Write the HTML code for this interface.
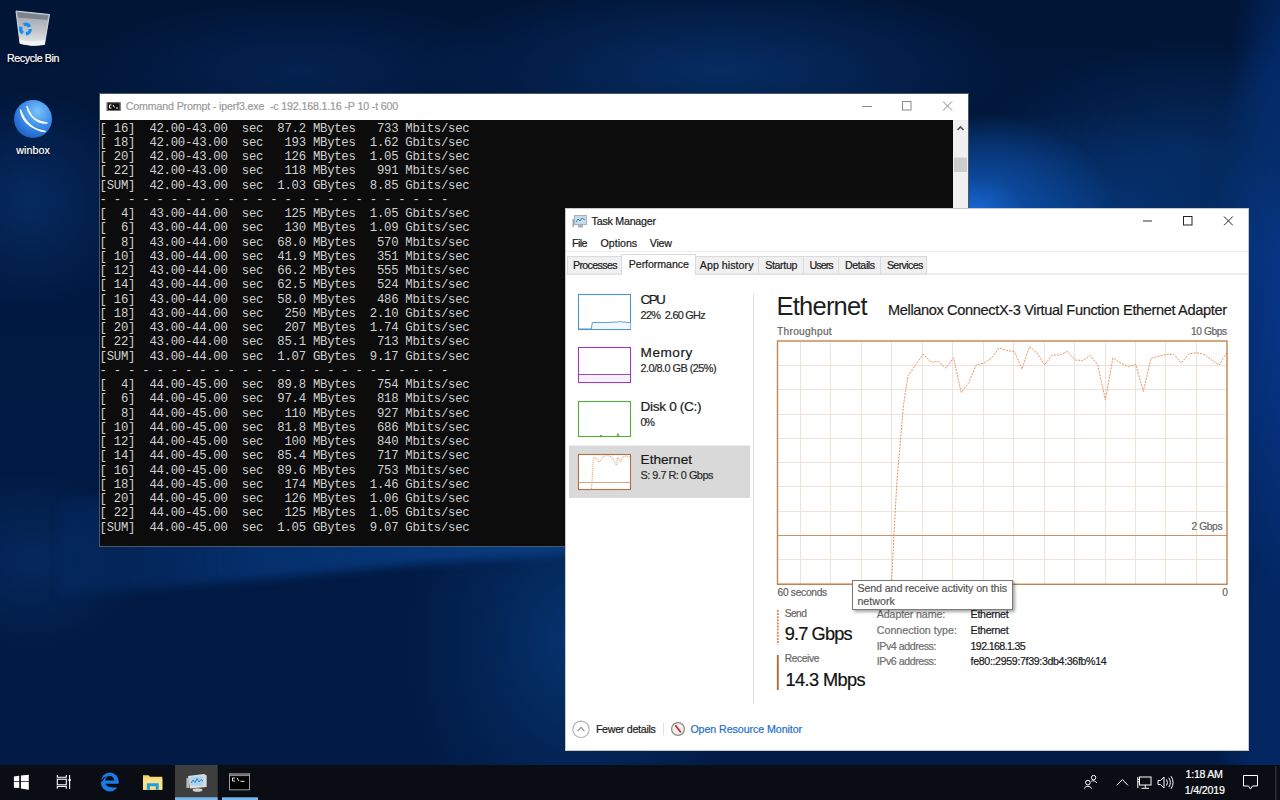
<!DOCTYPE html>
<html><head><meta charset="utf-8">
<style>
*{margin:0;padding:0;box-sizing:border-box}
html,body{width:1280px;height:800px;overflow:hidden}
body{position:relative;font-family:"Liberation Sans",sans-serif;background:#03204a}
.abs{position:absolute}
.t{position:absolute;white-space:pre;line-height:1;-webkit-text-stroke:0.2px currentColor}
svg{display:block}
#bg{position:absolute;left:0;top:0}
#cmd{position:absolute;left:99px;top:93px;width:870px;height:454px;background:#fff;border:1px solid #4a5868}
#cmdc{position:absolute;left:0;top:26px;width:853px;height:426px;background:#0c0c0c;overflow:hidden}
#cmdc pre{font-family:"Liberation Mono",monospace;font-size:12.3px;line-height:14.245px;letter-spacing:-0.269px;color:#d0d0d0;position:absolute;left:-0.4px;top:1.5px}
#cmdsb{position:absolute;left:853px;top:26px;width:15px;height:426px;background:#f0f0f0}
#tm{position:absolute;left:565px;top:208px;width:684px;height:543px;background:#fff}
#taskbar{position:absolute;left:0;top:764.5px;width:1280px;height:35.5px;background:#0b0d14}
</style></head><body>
<div id="bg" style="position:absolute;left:0;top:0;width:1280px;height:800px;overflow:hidden;
background:
radial-gradient(ellipse 140px 100px at 975px 212px, rgba(24,104,214,1) 0%, rgba(14,82,172,.75) 35%, rgba(8,60,130,0) 100%),
radial-gradient(ellipse 260px 120px at 1060px 230px, rgba(8,64,140,.8) 0%, rgba(8,64,140,0) 100%),
radial-gradient(ellipse 220px 110px at 1190px 150px, rgba(5,44,98,.85) 0%, rgba(5,44,98,0) 100%),
radial-gradient(ellipse 100px 300px at 1300px 300px, rgba(8,56,142,1) 0%, rgba(6,48,120,0) 100%),
radial-gradient(ellipse 90px 700px at 1300px 500px, rgba(3,40,102,1) 0%, rgba(3,40,102,.8) 70%, rgba(3,40,102,0) 100%),
radial-gradient(ellipse 300px 90px at 720px 70px, rgba(6,44,98,1) 0%, rgba(6,44,98,0) 100%),
radial-gradient(ellipse 220px 70px at 300px 70px, rgba(4,34,80,1) 0%, rgba(4,34,80,0) 100%),
radial-gradient(ellipse 110px 110px at 30px 200px, rgba(6,42,96,1) 0%, rgba(6,42,96,0) 100%),
radial-gradient(ellipse 110px 90px at 30px 560px, rgba(5,40,92,1) 0%, rgba(5,40,92,0) 100%),
radial-gradient(ellipse 170px 220px at 575px 640px, rgba(6,52,112,1) 0%, rgba(5,44,98,.6) 50%, rgba(5,44,98,0) 100%),
linear-gradient(180deg,#011536 0%,#011a42 45%,#011b46 100%);">
<div style="position:absolute;left:0;top:0;width:1280px;height:800px;filter:blur(5px)">
 <div style="position:absolute;left:0;top:0;width:1280px;height:800px;clip-path:polygon(60px 596px, 250px 580px, 420px 564px, 580px 553px, 580px 480px, 60px 500px);background:linear-gradient(90deg,rgba(6,50,116,0) 0%,rgba(6,52,118,.8) 20%,rgba(8,62,132,1) 45%,rgba(12,78,158,1) 100%)"></div>
</div>
</div>

<!-- desktop icons -->
<svg class="abs" style="left:0;top:0" width="70" height="160" viewBox="0 0 70 160">
 <defs><linearGradient id="binf" x1="0" y1="0" x2="0" y2="1"><stop offset="0" stop-color="#9aa0a8"/><stop offset="0.6" stop-color="#c4c8cc"/><stop offset="1" stop-color="#eceef0"/></linearGradient>
 <radialGradient id="wbx" cx="0.62" cy="0.3" r="0.85"><stop offset="0" stop-color="#7cc4fc"/><stop offset="0.5" stop-color="#3a8ae8"/><stop offset="1" stop-color="#1452b8"/></radialGradient></defs>
 <path d="M16,11 L49.5,14.5 L44.5,44.5 Q32,47 20,43.5 Z" fill="url(#binf)" stroke="#dfe2e6" stroke-width="0.9"/>
 <path d="M17.2,12.2 L48.3,15.4 L47.3,20 L18,17.5 Z" fill="#7c838c"/>
 <path d="M20,43.5 Q32,47 44.5,44.5 L45.2,40 Q32,42.5 19.6,39.5 Z" fill="#f4f6f8" opacity="0.8"/>
 <circle cx="25.5" cy="29" r="4.8" fill="none" stroke="#1a8ef0" stroke-width="3.4" stroke-dasharray="7 3"/>
 <circle cx="33" cy="119" r="19" fill="url(#wbx)"/>
 <path d="M20.5,110 Q23,127 45,131.5 Q27,129 20.5,110 Z" fill="#fff" stroke="#fff" stroke-width="1.6" stroke-linejoin="round"/>
 <path d="M27,106.5 Q30,121 47,123 Q33,124 27,106.5 Z" fill="#fff" stroke="#fff" stroke-width="1.3" stroke-linejoin="round"/>
</svg>
<div class="t" style="left:7.00px;top:52.67px;font-size:10.67px;color:#fff;letter-spacing:-0.377px;text-shadow:0 1px 2px rgba(0,0,0,.9)">Recycle Bin</div>
<div class="t" style="left:16.20px;top:144.87px;font-size:10.67px;color:#fff;letter-spacing:0.106px;text-shadow:0 1px 2px rgba(0,0,0,.9)">winbox</div>

<!-- cmd window -->
<div id="cmd">
 <div id="cmdc"><pre>[ 16]  42.00-43.00  sec  87.2 MBytes   733 Mbits/sec
[ 18]  42.00-43.00  sec   193 MBytes  1.62 Gbits/sec
[ 20]  42.00-43.00  sec   126 MBytes  1.05 Gbits/sec
[ 22]  42.00-43.00  sec   118 MBytes   991 Mbits/sec
[SUM]  42.00-43.00  sec  1.03 GBytes  8.85 Gbits/sec
- - - - - - - - - - - - - - - - - - - - - - - - -
[  4]  43.00-44.00  sec   125 MBytes  1.05 Gbits/sec
[  6]  43.00-44.00  sec   130 MBytes  1.09 Gbits/sec
[  8]  43.00-44.00  sec  68.0 MBytes   570 Mbits/sec
[ 10]  43.00-44.00  sec  41.9 MBytes   351 Mbits/sec
[ 12]  43.00-44.00  sec  66.2 MBytes   555 Mbits/sec
[ 14]  43.00-44.00  sec  62.5 MBytes   524 Mbits/sec
[ 16]  43.00-44.00  sec  58.0 MBytes   486 Mbits/sec
[ 18]  43.00-44.00  sec   250 MBytes  2.10 Gbits/sec
[ 20]  43.00-44.00  sec   207 MBytes  1.74 Gbits/sec
[ 22]  43.00-44.00  sec  85.1 MBytes   713 Mbits/sec
[SUM]  43.00-44.00  sec  1.07 GBytes  9.17 Gbits/sec
- - - - - - - - - - - - - - - - - - - - - - - - -
[  4]  44.00-45.00  sec  89.8 MBytes   754 Mbits/sec
[  6]  44.00-45.00  sec  97.4 MBytes   818 Mbits/sec
[  8]  44.00-45.00  sec   110 MBytes   927 Mbits/sec
[ 10]  44.00-45.00  sec  81.8 MBytes   686 Mbits/sec
[ 12]  44.00-45.00  sec   100 MBytes   840 Mbits/sec
[ 14]  44.00-45.00  sec  85.4 MBytes   717 Mbits/sec
[ 16]  44.00-45.00  sec  89.6 MBytes   753 Mbits/sec
[ 18]  44.00-45.00  sec   174 MBytes  1.46 Gbits/sec
[ 20]  44.00-45.00  sec   126 MBytes  1.06 Gbits/sec
[ 22]  44.00-45.00  sec   125 MBytes  1.05 Gbits/sec
[SUM]  44.00-45.00  sec  1.05 GBytes  9.07 Gbits/sec</pre></div>
 <div id="cmdsb"></div>
</div>
<svg class="abs" style="left:0;top:0" width="1280" height="800" viewBox="0 0 1280 800">
 <rect x="106.75" y="102.25" width="13.75" height="8.75" fill="#111"/>
 <rect x="107.25" y="102.75" width="12.75" height="7.75" fill="none" stroke="#777" stroke-width="1"/>
 <path d="M109.5,105 h2 M109.5,105 v3 h2 M113,105 l1.5,2.5 M116,108 h2" stroke="#fff" stroke-width="1"/>
 <line x1="862" y1="106.5" x2="872" y2="106.5" stroke="#8a8a8a" stroke-width="1"/>
 <rect x="902.5" y="101.5" width="8.5" height="8.5" fill="none" stroke="#8a8a8a" stroke-width="1"/>
 <path d="M943,101.5 L952,110.5 M952,101.5 L943,110.5" stroke="#8a8a8a" stroke-width="1"/>
 <path d="M957.5,130 L960.5,127 L963.5,130" fill="none" stroke="#505050" stroke-width="1.6"/>
 <rect x="954" y="157.5" width="13" height="14.5" fill="#cdcdcd"/>
</svg>
<div class="t" style="left:125.75px;top:100.57px;font-size:10.67px;color:#9a9a9a;letter-spacing:-0.155px;">Command Prompt - iperf3.exe  -c 192.168.1.16 -P 10 -t 600</div>

<!-- task manager -->
<div id="tm"></div>
<svg class="abs" style="left:0;top:0" width="1280" height="800" viewBox="0 0 1280 800">
 <!-- window border -->
 <rect x="565.5" y="208.5" width="683" height="542" fill="none" stroke="#c8c8c8" stroke-width="1"/>
 <!-- title icon -->
 <rect x="574.5" y="215.5" width="12" height="9" fill="#c8dbe8" stroke="#a8b0b8" stroke-width="1"/>
 <path d="M576,222 L578,219 L580,221 L582,218 L585,220" fill="none" stroke="#3a88c8" stroke-width="1"/>
 <rect x="578" y="225" width="5" height="2.5" fill="#a8b0b8"/>
 <rect x="572.5" y="219" width="1.5" height="8" fill="#a0a6ac"/>
 <!-- title buttons -->
 <line x1="1143" y1="221" x2="1152" y2="221" stroke="#333" stroke-width="1"/>
 <rect x="1183.5" y="216.5" width="8.5" height="8.5" fill="none" stroke="#222" stroke-width="1"/>
 <path d="M1224,216.5 L1232.8,225.3 M1232.8,216.5 L1224,225.3" stroke="#222" stroke-width="1"/>
 <!-- menu/tab separators -->
 <line x1="566" y1="251.5" x2="1248" y2="251.5" stroke="#ececec" stroke-width="1"/>
 <line x1="566" y1="274" x2="1248" y2="274" stroke="#dcdcdc" stroke-width="1"/>
 <!-- tabs -->
 <g stroke="#dadada" stroke-width="1" fill="#f0f0f0">
  <rect x="567.5" y="256.5" width="54" height="17.5"/>
  <rect x="695.5" y="256.5" width="63" height="17.5"/>
  <rect x="758.5" y="256.5" width="45" height="17.5"/>
  <rect x="803.5" y="256.5" width="35" height="17.5"/>
  <rect x="838.5" y="256.5" width="42" height="17.5"/>
  <rect x="880.5" y="256.5" width="46" height="17.5"/>
 </g>
 <path d="M621.5,275 V254.5 H695.5 V275" fill="#fff" stroke="#dadada" stroke-width="1"/>
 <!-- left panel separator -->
 <line x1="753.5" y1="293" x2="753.5" y2="704" stroke="#e2e2e2" stroke-width="1"/>
 <!-- selection -->
 <rect x="569" y="445.5" width="181" height="52.5" fill="#d9d9d9"/>
 <!-- CPU mini -->
 <rect x="578.5" y="294.5" width="52" height="35" fill="#fff" stroke="#4a94c8" stroke-width="1.1"/>
 <path d="M591.3,329 L592.3,322.6 L630.4,322.4 L630.4,329 Z" fill="#f1f7fb" stroke="none"/>
 <path d="M578.6,329 L591.3,329 L592.3,322.6 L600,322.4 L606,322.6 L612,322.2 L618,322 L620.5,321.3 L622,322.2 L625,322 L627,322.6 L630.4,322.4" fill="none" stroke="#4a94c8" stroke-width="0.9"/>
 <!-- Memory mini -->
 <rect x="578.5" y="347.5" width="52" height="35" fill="#fff" stroke="#9a3cb8" stroke-width="1.1"/>
 <rect x="579.2" y="374.5" width="50.6" height="7.5" fill="#f6f0f8"/>
 <line x1="578.6" y1="374.5" x2="630.4" y2="374.5" stroke="#a04cbc" stroke-width="1"/>
 <!-- Disk mini -->
 <rect x="578.5" y="401.5" width="52" height="35" fill="#fff" stroke="#58ac38" stroke-width="1.1"/>
 <path d="M600,436 l1,-1 l1,1 M617,436 l1,-2.5 l1,2.5" fill="none" stroke="#58ac38" stroke-width="1"/>
 <!-- Ethernet mini -->
 <rect x="578.5" y="454.5" width="52" height="35" fill="#fff" stroke="#b4703c" stroke-width="1.1"/>
 <line x1="578.6" y1="482.5" x2="630.4" y2="482.5" stroke="#cfa888" stroke-width="1"/>
 <path d="M591.6,489 L593.3,458 L596,457.5 L599.3,462.5 L602.6,457 L607,455.5 L612,457 L616.4,465.5 L617.5,457 L620.8,462 L622.4,457 L626.3,456 L630,457" fill="none" stroke="#e6a47c" stroke-width="0.9" stroke-dasharray="1.3 0.7"/>
 <!-- big graph -->
 <rect x="777.5" y="341" width="449.5" height="243.3" fill="#fff"/>
 <g stroke="#eee3d8" stroke-width="1"><line x1="800.5" y1="341" x2="800.5" y2="584"/><line x1="830.5" y1="341" x2="830.5" y2="584"/><line x1="861.5" y1="341" x2="861.5" y2="584"/><line x1="891.5" y1="341" x2="891.5" y2="584"/><line x1="922.5" y1="341" x2="922.5" y2="584"/><line x1="952.5" y1="341" x2="952.5" y2="584"/><line x1="983.5" y1="341" x2="983.5" y2="584"/><line x1="1013.5" y1="341" x2="1013.5" y2="584"/><line x1="1044.5" y1="341" x2="1044.5" y2="584"/><line x1="1074.5" y1="341" x2="1074.5" y2="584"/><line x1="1105.5" y1="341" x2="1105.5" y2="584"/><line x1="1135.5" y1="341" x2="1135.5" y2="584"/><line x1="1165.5" y1="341" x2="1165.5" y2="584"/><line x1="1196.5" y1="341" x2="1196.5" y2="584"/><line x1="777" y1="365.5" x2="1227" y2="365.5"/><line x1="777" y1="389.5" x2="1227" y2="389.5"/><line x1="777" y1="414.5" x2="1227" y2="414.5"/><line x1="777" y1="438.5" x2="1227" y2="438.5"/><line x1="777" y1="462.5" x2="1227" y2="462.5"/><line x1="777" y1="486.5" x2="1227" y2="486.5"/><line x1="777" y1="511.5" x2="1227" y2="511.5"/><line x1="777" y1="559.5" x2="1227" y2="559.5"/></g>
 <line x1="777" y1="535.5" x2="1227" y2="535.5" stroke="#cf9266" stroke-width="1"/>
 <path d="M777,584 L891.5,584 L894,534 L897,480 L900.4,441 L903.5,405 L908,376 L915.6,364.7 L923.2,354.2 L930.8,362.2 L938.4,361.3 L946,368.2 L953.6,357.7 L961.2,392.5 L968.7,382.7 L976.3,364.7 L983.9,363.2 L991.5,358 L999.1,348 L1006.7,350.5 L1014.3,351.5 L1021.9,369 L1029.5,346.5 L1037,353 L1044.6,365 L1052.2,355 L1059.8,355 L1067.4,351.5 L1075,360 L1082.6,360.5 L1090.2,355.5 L1097.8,365 L1105.4,400 L1112.9,357.9 L1120.5,363 L1128.1,366.5 L1135.7,364.5 L1143.3,391.4 L1150.9,358.4 L1158.5,356.3 L1166.1,354.3 L1173.7,354.3 L1181.3,363 L1188.9,353.8 L1196.4,352.8 L1204,354.3 L1211.6,359.9 L1219.2,365 L1226.8,352.3" fill="none" stroke="#e8915e" stroke-width="1" stroke-dasharray="2 1.2"/>
 <rect x="777.5" y="341" width="449.5" height="243.3" fill="none" stroke="#c4834e" stroke-width="1.4"/>
 <!-- send/receive lines -->
 <line x1="777.8" y1="610" x2="777.8" y2="644.5" stroke="#e5894f" stroke-width="1.8" stroke-dasharray="2 1.1"/>
 <line x1="777.8" y1="655" x2="777.8" y2="690" stroke="#b0632a" stroke-width="1.8"/>
 <!-- fewer details icons -->
 <circle cx="581" cy="729.3" r="8.2" fill="#fff" stroke="#b0b0b0" stroke-width="1.1"/>
 <path d="M577.6,731 L581,727.4 L584.4,731" fill="none" stroke="#909090" stroke-width="1.1"/>
 <line x1="663.5" y1="722.5" x2="663.5" y2="735" stroke="#e0e0e0" stroke-width="1"/>
 <circle cx="678" cy="729" r="6.4" fill="#f4f1e8" stroke="#8a8a8a" stroke-width="1.3"/>
 <line x1="675.3" y1="725.3" x2="680.8" y2="732.3" stroke="#d01830" stroke-width="1.6"/>
</svg>
<div class="t" style="left:591.60px;top:215.77px;font-size:10.67px;color:#1a1a1a;letter-spacing:-0.231px;">Task Manager</div>
<div class="t" style="left:572.00px;top:237.97px;font-size:10.67px;color:#1a1a1a;letter-spacing:-0.557px;">File</div>
<div class="t" style="left:600.60px;top:237.97px;font-size:10.67px;color:#1a1a1a;letter-spacing:-0.022px;">Options</div>
<div class="t" style="left:649.80px;top:237.97px;font-size:10.67px;color:#1a1a1a;letter-spacing:-0.269px;">View</div>
<div class="t" style="left:573.00px;top:259.97px;font-size:10.67px;color:#1a1a1a;letter-spacing:-0.656px;">Processes</div>
<div class="t" style="left:628.75px;top:258.57px;font-size:10.67px;color:#1a1a1a;letter-spacing:-0.077px;">Performance</div>
<div class="t" style="left:699.80px;top:259.97px;font-size:10.67px;color:#1a1a1a;letter-spacing:0.039px;">App history</div>
<div class="t" style="left:765.20px;top:259.97px;font-size:10.67px;color:#1a1a1a;letter-spacing:-0.360px;">Startup</div>
<div class="t" style="left:809.50px;top:259.97px;font-size:10.67px;color:#1a1a1a;letter-spacing:-0.932px;">Users</div>
<div class="t" style="left:844.90px;top:259.97px;font-size:10.67px;color:#1a1a1a;letter-spacing:-0.380px;">Details</div>
<div class="t" style="left:886.90px;top:259.97px;font-size:10.67px;color:#1a1a1a;letter-spacing:-0.625px;">Services</div>
<div class="t" style="left:640.60px;top:293.29px;font-size:13.6px;color:#1a1a1a;letter-spacing:-1.702px;">CPU</div>
<div class="t" style="left:640.60px;top:309.57px;font-size:10.9px;color:#2a2a2a;letter-spacing:-0.730px;">22%  2.60 GHz</div>
<div class="t" style="left:640.60px;top:346.49px;font-size:13.6px;color:#1a1a1a;letter-spacing:0.521px;">Memory</div>
<div class="t" style="left:640.60px;top:363.17px;font-size:10.9px;color:#2a2a2a;letter-spacing:-0.544px;">2.0/8.0 GB (25%)</div>
<div class="t" style="left:640.60px;top:400.19px;font-size:13.6px;color:#1a1a1a;letter-spacing:-0.330px;">Disk 0 (C:)</div>
<div class="t" style="left:640.60px;top:416.57px;font-size:10.9px;color:#2a2a2a;letter-spacing:-1.350px;">0%</div>
<div class="t" style="left:640.60px;top:453.29px;font-size:13.6px;color:#1a1a1a;letter-spacing:0.001px;">Ethernet</div>
<div class="t" style="left:640.60px;top:469.57px;font-size:10.9px;color:#2a2a2a;letter-spacing:-0.514px;">S: 9.7 R: 0 Gbps</div>
<div class="t" style="left:776.60px;top:293.81px;font-size:25.5px;color:#1e1e1e;letter-spacing:-0.787px;-webkit-text-stroke:0">Ethernet</div>
<div class="t" style="left:888.00px;top:303.34px;font-size:14.6px;color:#1a1a1a;letter-spacing:-0.371px;">Mellanox ConnectX-3 Virtual Function Ethernet Adapter</div>
<div class="t" style="left:777.00px;top:327.07px;font-size:10.2px;color:#626262;letter-spacing:0.288px;">Throughput</div>
<div class="t" style="left:1191.00px;top:327.07px;font-size:10.2px;color:#626262;letter-spacing:-0.403px;">10 Gbps</div>
<div class="t" style="left:1191.50px;top:522.07px;font-size:10.2px;color:#626262;letter-spacing:-0.372px;">2 Gbps</div>
<div class="t" style="left:1222.13px;top:587.67px;font-size:10.2px;color:#626262;letter-spacing:0.000px;">0</div>
<div class="t" style="left:777.50px;top:587.97px;font-size:10.2px;color:#626262;letter-spacing:-0.268px;">60 seconds</div>
<div class="t" style="left:784.75px;top:608.87px;font-size:10.2px;color:#666666;letter-spacing:-0.549px;">Send</div>
<div class="t" style="left:784.75px;top:625.19px;font-size:18.2px;color:#111;letter-spacing:-0.866px;">9.7 Gbps</div>
<div class="t" style="left:784.75px;top:653.87px;font-size:10.2px;color:#666666;letter-spacing:-0.360px;">Receive</div>
<div class="t" style="left:785.60px;top:670.84px;font-size:18.2px;color:#111;letter-spacing:-0.617px;">14.3 Mbps</div>
<div class="t" style="left:876.80px;top:608.77px;font-size:10.67px;color:#6e6e6e;letter-spacing:-0.126px;">Adapter name:</div>
<div class="t" style="left:876.80px;top:625.17px;font-size:10.67px;color:#6e6e6e;letter-spacing:0.008px;">Connection type:</div>
<div class="t" style="left:876.80px;top:640.77px;font-size:10.67px;color:#6e6e6e;letter-spacing:-0.463px;">IPv4 address:</div>
<div class="t" style="left:876.80px;top:656.37px;font-size:10.67px;color:#6e6e6e;letter-spacing:-0.463px;">IPv6 address:</div>
<div class="t" style="left:970.60px;top:608.77px;font-size:10.67px;color:#1a1a1a;letter-spacing:-0.314px;">Ethernet</div>
<div class="t" style="left:970.60px;top:625.17px;font-size:10.67px;color:#1a1a1a;letter-spacing:-0.314px;">Ethernet</div>
<div class="t" style="left:970.60px;top:640.77px;font-size:10.67px;color:#1a1a1a;letter-spacing:-0.649px;">192.168.1.35</div>
<div class="t" style="left:970.60px;top:656.37px;font-size:10.67px;color:#1a1a1a;letter-spacing:-0.358px;">fe80::2959:7f39:3db4:36fb%14</div>
<div class="t" style="left:595.90px;top:724.27px;font-size:10.67px;color:#1a1a1a;letter-spacing:-0.281px;">Fewer details</div>
<div class="t" style="left:690.40px;top:724.27px;font-size:10.67px;color:#1f6fc8;letter-spacing:-0.072px;">Open Resource Monitor</div>
<!-- tooltip -->
<div class="abs" style="left:852px;top:579.7px;width:161px;height:30.3px;background:#fff;border:1px solid #7a7a7a;box-shadow:2px 2px 3px rgba(0,0,0,.35)"></div>
<div class="t" style="left:857.40px;top:582.67px;font-size:10.67px;color:#575757;letter-spacing:-0.101px;">Send and receive activity on this</div>
<div class="t" style="left:857.40px;top:595.97px;font-size:10.67px;color:#575757;letter-spacing:0.031px;">network</div>

<!-- taskbar -->
<div id="taskbar"></div>
<svg class="abs" style="left:0;top:0" width="1280" height="800" viewBox="0 0 1280 800">
 <!-- start -->
 <path d="M13.9,776.4 L19.2,775.7 L19.2,781.2 L13.9,781.2 Z M20.9,775.5 L28.8,774.75 L28.8,781.2 L20.9,781.2 Z M13.9,782 L19.2,782 L19.2,788 L13.9,787.7 Z M20.9,782 L28.8,782 L28.8,789.65 L20.9,788.6 Z" fill="#fff"/>
 <!-- task view -->
 <path d="M57.3,775 V777.3 H66.3 V775 M57.3,788.8 V786.5 H66.3 V788.8" fill="none" stroke="#fff" stroke-width="1.1"/>
 <rect x="57.3" y="779.2" width="9" height="5.6" fill="none" stroke="#fff" stroke-width="1.1"/>
 <line x1="69.6" y1="775" x2="69.6" y2="789" stroke="#fff" stroke-width="1.1"/>
 <circle cx="69.6" cy="780" r="1.3" fill="#fff"/>
 <!-- edge -->
 <ellipse cx="109.8" cy="782" rx="9" ry="9.6" fill="#1b7ae6"/>
 <path d="M105.3,780.4 C105.5,777.4 107.4,775.9 109.8,775.9 C112.2,775.9 114.1,777.4 114.3,780.4 Z" fill="#0b0d14"/>
 <path d="M105.6,783.7 H119.2 V787.4 H114.8 C110.2,787.4 106.2,786.6 105.6,783.7 Z" fill="#0b0d14"/>
 <path d="M100.6,781.5 C102,778.2 104.5,776.6 107.5,776 C105,777.2 103.3,779 102.6,781.6 Z" fill="#0b0d14"/>
 <!-- folder -->
 <path d="M143,775.3 L148.5,775.3 L150,776.8 L162.3,776.8 L162.3,789.8 L143,789.8 Z" fill="#f6d36e"/>
 <rect x="143" y="778.5" width="19.3" height="11.3" fill="#fbe08a"/>
 <path d="M146.9,789.8 V783.3 H158.7 V789.8 H155.7 V786.3 H149.9 V789.8 Z" fill="#1ba1e2"/>
 <!-- TM button -->
 <rect x="175" y="765" width="42.7" height="35" fill="#3e3e3e"/>
 <rect x="175" y="797.3" width="42.7" height="2.7" fill="#76b9ed"/>
 <rect x="222" y="797.3" width="36" height="2.7" fill="#76b9ed"/>
 <path d="M188,776 L204,774 L206.6,775.5 L206.6,787 L190,788.5 Z" fill="#dcdcdc"/>
 <rect x="190.5" y="776.5" width="13" height="9" fill="#a8d4f0"/>
 <path d="M191,783 L193,780 L195,782.5 L197,778.5 L199,782 L201,779.5 L203,781" fill="none" stroke="#2a78c0" stroke-width="0.9"/>
 <ellipse cx="197.5" cy="790" rx="5" ry="1.8" fill="#d0d0d0"/>
 <rect x="186.4" y="778" width="3" height="10" fill="#b8b8b8"/>
 <!-- cmd icon -->
 <rect x="229.5" y="773.8" width="20" height="16" fill="#000" stroke="#9a9a9a" stroke-width="1"/>
 <rect x="230" y="774.3" width="19" height="1.8" fill="#8a8a8a"/>
 <path d="M232.5,778 h2.5 M232.5,778 v3 h2.5 M237,777.8 l2,3.3 M240.5,781.3 h4" stroke="#e8e8e8" stroke-width="1"/>
 <!-- tray -->
 <g fill="none" stroke="#fff" stroke-width="1">
  <circle cx="1093.6" cy="777.6" r="2.2"/>
  <path d="M1091.2,781.2 C1093,780.2 1095.5,780.8 1096.9,783"/>
  <circle cx="1087.9" cy="782.6" r="2.3"/>
  <path d="M1084.3,788.6 C1085,785.6 1090.8,785.6 1091.6,788.6"/>
  <path d="M1116.8,785.4 L1122.4,779.5 L1128,785.4"/>
  <rect x="1139.5" y="777" width="11.5" height="8"/>
  <path d="M1145.3,785 V787.8 M1141.5,788.3 H1149 M1137.8,777 V788 M1137.8,779.5 H1139.5 M1137.8,781.8 H1139.5"/>
  <path d="M1158,780.5 H1160.5 L1164,777 V788 L1160.5,784.5 H1158 Z"/>
  <path d="M1166.5,779.5 Q1168.5,782.5 1166.5,785.5 M1168.8,777.8 Q1172,782.5 1168.8,787.2 M1171,776.2 Q1175.2,782.5 1171,788.8"/>
  <path d="M1243.5,775.5 H1257.5 V786 H1252.5 L1250.5,789 L1248.5,786 H1243.5 Z"/>
 </g>
 <line x1="1275.8" y1="766" x2="1275.8" y2="800" stroke="#3a3d44" stroke-width="1"/>
</svg>
<div class="t" style="left:1185.60px;top:769.27px;font-size:10.67px;color:#fff;letter-spacing:-0.285px;">1:18 AM</div>
<div class="t" style="left:1184.80px;top:784.57px;font-size:10.67px;color:#fff;letter-spacing:-0.183px;">1/4/2019</div>
</body></html>
